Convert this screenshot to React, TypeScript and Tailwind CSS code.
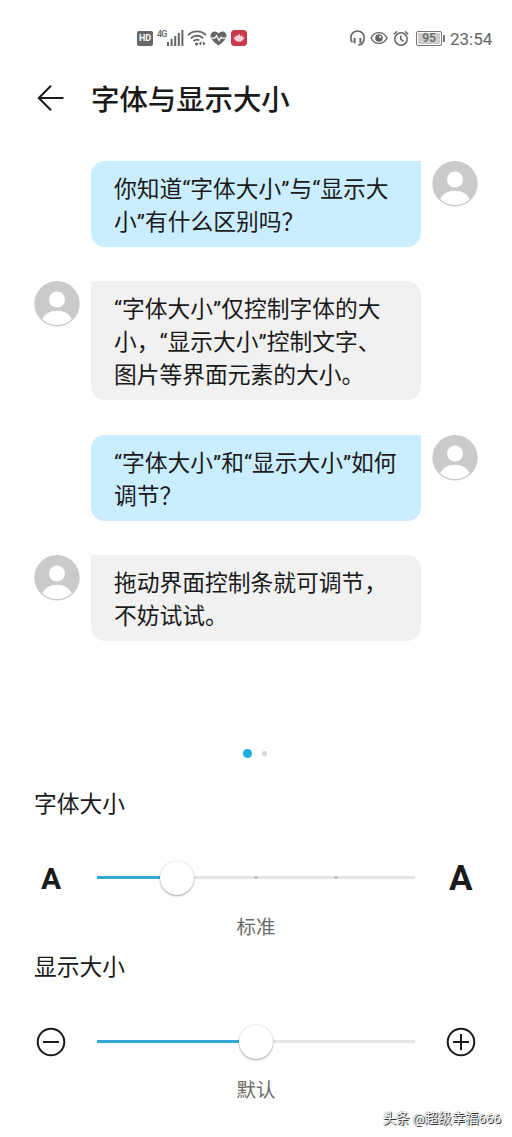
import React, { useState } from 'react';

interface Message {
  id: number;
  mine: boolean;
  lines: string[];
}

interface SliderProps {
  value: number;
  ticks?: number[];
  label: string;
}

const MESSAGES: Message[] = [
  { id: 1, mine: true, lines: ['你知道“字体大小”与“显示大', '小”有什么区别吗？'] },
  { id: 2, mine: false, lines: ['“字体大小”仅控制字体的大', '小，“显示大小”控制文字、', '图片等界面元素的大小。'] },
  { id: 3, mine: true, lines: ['“字体大小”和“显示大小”如何', '调节？'] },
  { id: 4, mine: false, lines: ['拖动界面控制条就可调节，', '不妨试试。'] },
];

const StatusBar: React.FC = () => (
  <div className="flex h-[76px] items-center justify-between pl-[137px] pr-[19px] text-[#666]">
    <div className="flex items-center">
      <div className="flex h-[15px] w-[16px] items-center justify-center rounded-[2px] bg-[#666] text-[9px] font-bold leading-none text-white">
        HD
      </div>
      <span className="ml-[4px] w-[10px] self-start text-[9px] font-medium leading-[9px] tracking-[-0.8px]">4G</span>
      <svg className="h-[16px] w-[17px]" viewBox="0 0 17 16" fill="currentColor">
        <rect x="0" y="12" width="2" height="4" />
        <rect x="3.6" y="9" width="2" height="7" />
        <rect x="7.2" y="6" width="2" height="10" />
        <rect x="10.8" y="3" width="2" height="13" />
        <rect x="14.4" y="0" width="2" height="16" />
      </svg>
      <svg className="ml-[3px] h-[16px] w-[20px]" viewBox="0 0 20 16" fill="none" stroke="currentColor" strokeWidth="1.8">
        <path d="M1 5.2C6 .2 14 .2 19 5.2" />
        <path d="M3.8 8.3c3.4-3.4 9-3.4 12.4 0" />
        <path d="M6.6 11.3c1.6-1.7 4-2 5.6-1" />
        <circle cx="9.6" cy="14" r="1.6" fill="currentColor" stroke="none" />
        <path d="M14.3 11.2v4.4L11.7 13.4zM15.9 11.2v4.4l2.7-2.2z" fill="currentColor" stroke="none" />
      </svg>
      <svg className="ml-[3px] h-[15px] w-[17px]" viewBox="0 0 17 15">
        <path d="M8.5 14.6C5 11.8.5 8.6.5 4.7.5 2.3 2.3.5 4.6.5c1.6 0 3 .8 3.9 2.1C9.4 1.3 10.8.5 12.4.5c2.3 0 4.1 1.8 4.1 4.2 0 3.9-4.5 7.1-8 9.9z" fill="#666" />
        <path d="M1 7.2h3.8l1.7-2.6 2.6 5 2-3.4.9 1h4" fill="none" stroke="#fff" strokeWidth="1.2" />
      </svg>
      <svg className="ml-[4px] h-[16px] w-[16px]" viewBox="0 0 16 16">
        <rect width="16" height="16" rx="3.5" fill="#c93b4b" />
        <path d="M8 3.6l1.4 2.6 2-1.2v2.5l2-.4c-.5 3-2.7 4.7-5.4 4.7S3.1 10.1 2.6 7.1l2 .4V5l2 1.2z" fill="#f6d3d5" />
      </svg>
    </div>
    <div className="flex items-center">
      <svg className="h-[16px] w-[15px]" viewBox="0 0 15 16" fill="none" stroke="currentColor" strokeWidth="1.6">
        <path d="M2.4 12.4C.9 11.2.9 9.4.9 7.4.9 3.700 3.700 1 7.500 1s6.600 2.700 6.600 6.400c0 4.600-1.200 7.400-5.800 7.500" />
        <path d="M4.600 8v5.200M10.400 8v5.200" strokeWidth="2" />
      </svg>
      <svg className="ml-[5px] h-[14px] w-[18px]" viewBox="0 0 18 14" fill="none" stroke="currentColor" strokeWidth="1.4">
        <path d="M1 7c3.6-7.2 12.4-7.2 16 0-3.6 7.2-12.4 7.2-16 0z" />
        <circle cx="9" cy="7" r="3.8" fill="currentColor" stroke="none" />
        <circle cx="10.2" cy="5.8" r="1.1" fill="#fff" stroke="none" />
      </svg>
      <svg className="ml-[5px] h-[17px] w-[16px]" viewBox="0 0 16 17" fill="none" stroke="currentColor" strokeWidth="1.5">
        <circle cx="8" cy="9" r="6.2" />
        <path d="M7.7 5.4v4l2.8 1.8M.8 4.3L4 1.4M15.2 4.3L12 1.4" />
      </svg>
      <div className="ml-[7px] flex h-[15px] w-[26px] items-center justify-center rounded-[2px] border border-[#777] bg-[#ccc] text-[12px] font-medium leading-none shadow-[inset_0_0_0_1px_#fff]">
        95
      </div>
      <div className="ml-px h-[7px] w-[2px] bg-[#777]" />
      <span className="ml-[5px] w-[43px] whitespace-nowrap pt-px text-[17px] leading-5">23:54</span>
    </div>
  </div>
);

const Avatar: React.FC = () => (
  <svg className="h-[46px] w-[46px] shrink-0" viewBox="0 0 46 46">
    <circle cx="23" cy="22.7" r="22.7" fill="#cacaca" />
    <circle cx="23" cy="18.5" r="8" fill="#fff" />
    <path d="M8.3 38.2C10.5 32.9 16 29.7 23 29.7s12.5 3.2 14.7 8.5a21.5 21.5 0 0 1-29.4 0z" fill="#fff" />
  </svg>
);

const Bubble: React.FC<{ message: Message }> = ({ message }) => (
  <div className={message.mine ? 'flex items-start gap-[11px] pl-[57px]' : 'flex items-start gap-[11px]'}>
    {!message.mine && <Avatar />}
    <div
      className={
        message.mine
          ? 'w-[330px] rounded-[14px] rounded-tr-none bg-[#caeeff] pb-[8px] pt-[12px] pl-[23px]'
          : 'w-[330px] rounded-[14px] rounded-tl-none bg-[#f1f1f1] pb-[8px] pt-[12px] pl-[23px]'
      }
    >
      {message.lines.map((line) => (
        <p key={line} className="whitespace-nowrap text-[22.75px] leading-[33px]">
          {line}
        </p>
      ))}
    </div>
    {message.mine && <Avatar />}
  </div>
);

const Slider: React.FC<SliderProps> = ({ value, ticks = [], label }) => (
  <div className="relative flex h-[36px] w-[318px] items-center" role="slider" aria-label={label} aria-valuenow={value}>
    <div className="h-[3px] w-full bg-[#e5e5e5]">
      <div className="h-full bg-[#32a9d8]" style={{ width: `${value}%` }} />
    </div>
    {ticks.map((tick) => (
      <span
        key={tick}
        className="absolute h-[3px] w-[3px] -translate-x-1/2 rounded-full bg-[#b5b5b5]"
        style={{ left: `${tick}%` }}
      />
    ))}
    <span
      className="absolute h-[34px] w-[34px] -translate-x-1/2 rounded-full bg-white shadow-[0_1px_2px_rgba(0,0,0,0.35),0_0_1px_rgba(0,0,0,0.2)]"
      style={{ left: `${value}%` }}
    />
  </div>
);

const App: React.FC = () => {
  const [fontSize] = useState(25);
  const [displaySize] = useState(50);

  return (
    <div className="relative flex h-[1137px] w-[512px] flex-col overflow-hidden bg-[#fefefe] font-['Roboto','Noto_Sans_CJK_SC',sans-serif] text-[#1a1a1a]">
      <StatusBar />

      <header className="flex h-[44px] items-center pl-[37px]">
        <svg className="h-[26px] w-[27px]" viewBox="0 0 27 26" fill="none" stroke="#1a1a1a" strokeWidth="2">
          <path d="M26.5 13H2M14 .8L1.8 13 14 25.2" />
        </svg>
        <h1 className="ml-[27px] pt-[6px] text-[28.4px] font-medium leading-[44px]">字体与显示大小</h1>
      </header>

      <main className="mt-[41px] flex flex-col gap-[34.3px] pl-[34px]">
        {MESSAGES.map((message) => (
          <Bubble key={message.id} message={message} />
        ))}
      </main>

      <div className="mt-[108px] flex h-[9px] items-center pl-[243px]">
        <span className="h-[9px] w-[9px] rounded-full bg-[#18acdf]" />
        <span className="ml-[10px] h-[5px] w-[5px] rounded-full bg-[#d5d5d5]" />
      </div>

      <section className="mt-[30px]">
        <h2 className="pl-[34px] text-[22.75px] leading-[34px]">字体大小</h2>
        <div className="mt-[38px] flex h-[36px] items-center">
          <span className="w-[97px] pl-[41px] pt-[2px] text-[30px] font-bold leading-9">A</span>
          <Slider value={fontSize} ticks={[50, 75]} label="字体大小" />
          <span className="pl-[34px] pt-[2px] text-[35px] font-bold leading-9">A</span>
        </div>
        <p className="mt-[16px] text-center text-[19.5px] leading-[32px] text-[#6a6a6a]">标准</p>
      </section>

      <section className="mt-[7px]">
        <h2 className="pl-[34px] text-[22.75px] leading-[34px]">显示大小</h2>
        <div className="mt-[39px] flex h-[36px] items-center">
          <svg className="ml-[36px] mr-[31px] h-[30px] w-[30px]" viewBox="0 0 30 30" fill="none" stroke="#1a1a1a" strokeWidth="2">
            <circle cx="15" cy="15" r="13.3" />
            <path d="M7 15h16" />
          </svg>
          <Slider value={displaySize} label="显示大小" />
          <svg className="ml-[31px] h-[30px] w-[30px]" viewBox="0 0 30 30" fill="none" stroke="#1a1a1a" strokeWidth="2">
            <circle cx="15" cy="15" r="13.3" />
            <path d="M7 15h16M15 7v16" />
          </svg>
        </div>
        <p className="mt-[15px] text-center text-[19.5px] leading-[32px] text-[#6a6a6a]">默认</p>
      </section>

      <span className="absolute bottom-[8px] right-[11px] whitespace-nowrap text-[13.4px] leading-5 text-white [text-shadow:1px_1px_0_#333,0_0_1px_#333]">
        头条 @超级幸福666
      </span>
    </div>
  );
};

export default App;
